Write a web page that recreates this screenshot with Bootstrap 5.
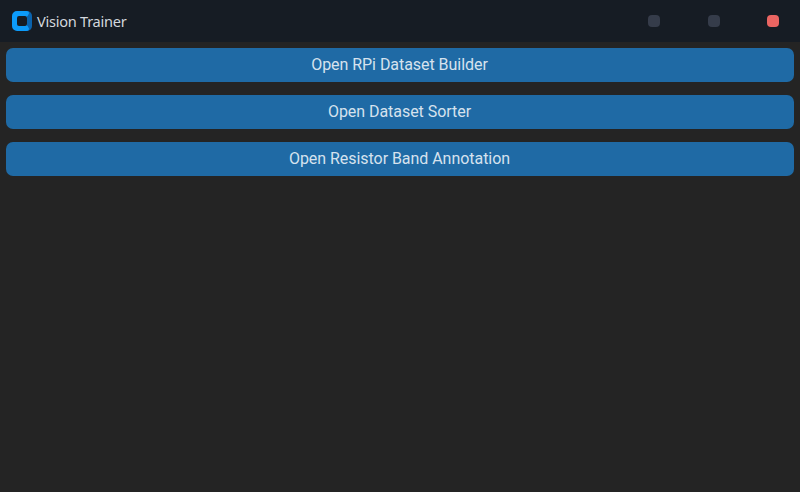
<!DOCTYPE html>
<html lang="en">
<head>
<meta charset="utf-8">
<meta name="viewport" content="width=device-width, initial-scale=1">
<title>Vision Trainer</title>
<link href="https://cdn.jsdelivr.net/npm/bootstrap@5.3.0/dist/css/bootstrap.min.css" rel="stylesheet">
<style>
  body { background: #242424; font-family: Roboto, sans-serif; }
  .titlebar { height: 42px; background: #161c24; padding: 0 21px 0 12px; }
  .app-name { font: 400 14.6px/20px "Noto Sans", sans-serif; color: #d3d7dd; margin-left: 5px; letter-spacing: -.27px; }
  .win-dots { gap: 48px; }
  .win-dot { width: 12px; height: 12px; border-radius: 4px; background: #353c4a; border: 0; padding: 0; }
  .win-dot.close-dot { background: #ea6562; margin-left: -1px; }
  .actions { padding: 6px; gap: 13px; }
  .btn-action { --bs-btn-bg: #1f6aa5; --bs-btn-color: #d6e2ee; --bs-btn-hover-bg: #144870; --bs-btn-hover-color: #dce4ee;
    height: 34px; border: 0; border-radius: 7px; padding: 0 1px 0 0; font-size: 16px; line-height: 34px; letter-spacing: -.045px; }
</style>
</head>
<body class="vh-100 overflow-hidden d-flex flex-column">
<header class="titlebar d-flex align-items-center justify-content-between">
  <div class="d-flex align-items-center">
    <svg width="20" height="20" viewBox="0 0 20 20" aria-hidden="true">
      <rect x="8" width="12" height="20" rx="5" fill="#0a63ae"/>
      <path d="M5 0h9.500a2.500 2.500 0 0 1 2.500 2.500L15 6v8l2 3.500a2.500 2.500 0 0 1-2.500 2.500H5a5 5 0 0 1-5-5V5a5 5 0 0 1 5-5z" fill="#0c9bfa"/>
      <rect x="15" y="5.500" width="2" height="9" fill="#0a63ae"/>
      <rect x="5" y="5" width="10" height="10" rx="2" fill="#161c24"/>
    </svg>
    <span class="app-name">Vision Trainer</span>
  </div>
  <div class="win-dots d-flex">
    <button class="win-dot" aria-label="Minimize"></button>
    <button class="win-dot" aria-label="Maximize"></button>
    <button class="win-dot close-dot" aria-label="Close"></button>
  </div>
</header>
<main class="actions d-grid">
  <button class="btn btn-action">Open RPi Dataset Builder</button>
  <button class="btn btn-action">Open Dataset Sorter</button>
  <button class="btn btn-action">Open Resistor Band Annotation</button>
</main>
<script src="https://cdn.jsdelivr.net/npm/bootstrap@5.3.0/dist/js/bootstrap.bundle.min.js"></script>
</body>
</html>
